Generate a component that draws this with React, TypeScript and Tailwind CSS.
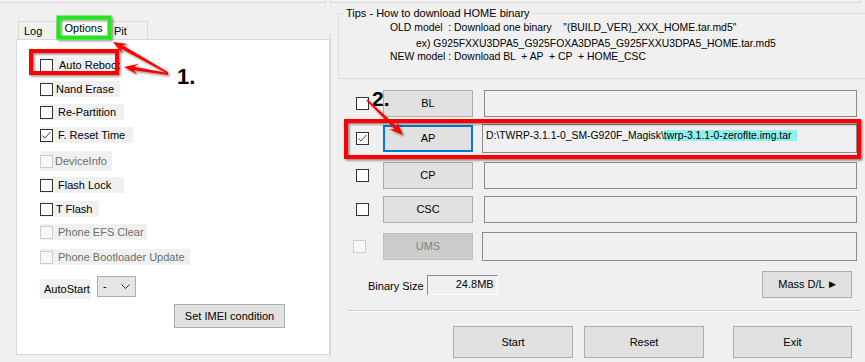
import type { ReactNode } from "react";

type Opt = {
  label: string;
  w: number;
  mt: number;
  gap: number;
  h?: number;
  checked?: boolean;
  disabled?: boolean;
};

const OPTIONS: Opt[] = [
  { label: "Auto Reboot", w: 78, mt: 17, gap: 6 },
  { label: "Nand Erase", w: 80, mt: 8, gap: 3 },
  { label: "Re-Partition", w: 84, mt: 7, gap: 5 },
  { label: "F. Reset Time", w: 93, mt: 7, gap: 5, checked: true },
  { label: "DeviceInfo", w: 72, mt: 8, gap: 2, h: 20, disabled: true },
  { label: "Flash Lock", w: 84, mt: 6, gap: 5 },
  { label: "T Flash", w: 59, mt: 8, gap: 3 },
  { label: "Phone EFS Clear", w: 107, mt: 7, gap: 5, disabled: true },
  { label: "Phone Bootloader Update", w: 150, mt: 9, gap: 5, disabled: true },
];

function Check({ checked = false, disabled = false }: { checked?: boolean; disabled?: boolean }) {
  return (
    <span
      className={`flex h-[13px] w-[13px] shrink-0 items-center justify-center border ${
        disabled ? "border-[#cccccc] bg-[#f7f7f7]" : "border-[#333333] bg-white"
      }`}
    >
      {checked && (
        <svg width="11" height="11" viewBox="0 0 11 11">
          <polyline points="1.5,5.5 4,8 9.5,2" fill="none" stroke="#444" strokeWidth="1" />
        </svg>
      )}
    </span>
  );
}

function Btn({
  children,
  className = "",
  focused = false,
  disabled = false,
}: {
  children: ReactNode;
  className?: string;
  focused?: boolean;
  disabled?: boolean;
}) {
  return (
    <div
      className={`flex shrink-0 items-center justify-center ${
        focused
          ? "border-2 border-[#0078d7] bg-[#e1e1e1]"
          : disabled
          ? "border border-[#bfbfbf] bg-[#cccccc] text-[#838383]"
          : "border border-[#adadad] bg-[#e1e1e1]"
      } ${className}`}
    >
      {children}
    </div>
  );
}

function FileRow({
  label,
  mt,
  checked,
  disabled,
  focused,
  value,
}: {
  label: string;
  mt: number;
  checked?: boolean;
  disabled?: boolean;
  focused?: boolean;
  value?: ReactNode;
}) {
  const tall = focused || disabled;
  return (
    <div className="flex items-center" style={{ marginTop: mt }}>
      <div className={disabled ? "ml-[22px]" : "ml-[25px]"}>
        <Check checked={checked} disabled={disabled} />
      </div>
      <Btn
        focused={focused}
        disabled={disabled}
        className={`h-[27px] w-[90px] ${disabled ? "ml-[17px]" : "ml-[14px]"}`}
      >
        {label}
      </Btn>
      <div
        className={`flex items-start border border-[#8a8a8a] bg-[#f0f0f0] ${
          tall ? "ml-[9px] h-[29px] w-[375px]" : "ml-[11px] h-[27px] w-[373px]"
        }`}
      >
        {value && (
          <div className="ml-[3px] mt-[4px] whitespace-pre text-[10.4px] leading-[13px]">{value}</div>
        )}
      </div>
    </div>
  );
}

function arrow(x1: number, y1: number, x2: number, y2: number) {
  const dx = x2 - x1;
  const dy = y2 - y1;
  const L = Math.hypot(dx, dy);
  const ux = dx / L;
  const uy = dy / L;
  const px = -uy;
  const py = ux;
  const head = 14;
  const hw = 5.5;
  const bx = x2 - ux * head;
  const by = y2 - uy * head;
  const nx = x2 - ux * (head - 4);
  const ny = y2 - uy * (head - 4);
  const t = 0.9;
  const s = 1.8;
  const pts = [
    [x1 + px * t, y1 + py * t],
    [nx + px * s, ny + py * s],
    [bx + px * hw, by + py * hw],
    [x2, y2],
    [bx - px * hw, by - py * hw],
    [nx - px * s, ny - py * s],
    [x1 - px * t, y1 - py * t],
  ];
  return pts.map((p) => `${p[0].toFixed(1)},${p[1].toFixed(1)}`).join(" ");
}

function Annotations() {
  return (
    <svg className="pointer-events-none absolute left-0 top-0 z-20" width="865" height="362">
      <defs>
        <filter id="sh" x="-20%" y="-20%" width="140%" height="140%">
          <feDropShadow dx="1.5" dy="1.5" stdDeviation="1.2" floodColor="#000" floodOpacity="0.45" />
        </filter>
      </defs>
      <g filter="url(#sh)">
        <rect x="58.5" y="17.5" width="51" height="20" fill="none" stroke="#1fe81f" strokeWidth="4" />
        <rect x="31" y="51" width="86" height="22" fill="none" stroke="#ff0000" strokeWidth="4" />
        <rect x="346" y="121" width="513" height="36" fill="none" stroke="#ff0000" strokeWidth="4" />
        <polygon points={arrow(168, 73, 113, 42)} fill="#ff0000" />
        <polygon points={arrow(168, 74, 124, 67)} fill="#ff0000" />
        <polygon points={arrow(367, 100, 403, 135)} fill="#ff0000" />
      </g>
    </svg>
  );
}

export default function App() {
  return (
    <div className="relative h-[362px] w-[865px] overflow-hidden bg-[#f0f0f0] font-['Liberation_Sans',Arial,sans-serif] text-[11px] text-black">
      {/* cut-off header boxes */}
      <div className="flex h-[3px]">
        <div className="w-[326px] border-b border-r border-[#d9d9d9]" />
        <div className="ml-[4px] w-[531px] border-b border-x border-[#d9d9d9]" />
      </div>

      <div className="flex">
        {/* left: tabs */}
        <div className="w-[330px] shrink-0 pl-[16px]">
          <div className="mt-[15px] flex h-[21px] items-end pl-[2px]">
            <div className="h-[18px] w-[39px] border border-b-0 border-[#d9d9d9] bg-[#f0f0f0] pl-[5px] pt-[3px] leading-[13px]">
              Log
            </div>
            <div className="relative z-10 -mb-px h-[22px] w-[53px] border border-b-0 border-[#d9d9d9] bg-white pt-[3px] text-center leading-[13px]">
              Options
            </div>
            <div className="h-[18px] w-[38px] border border-b-0 border-l-0 border-[#d9d9d9] bg-[#f0f0f0] pl-[4px] pt-[3px] leading-[13px]">
              Pit
            </div>
          </div>
          <div className="h-[316px] w-[314px] border border-[#d9d9d9] bg-white pl-[23px]">
            {OPTIONS.map((o) => (
              <div
                key={o.label}
                className="flex items-center bg-[#f0f0f0]"
                style={{ marginTop: o.mt, width: o.w, height: o.h ?? 16, gap: o.gap }}
              >
                <Check checked={o.checked} disabled={o.disabled} />
                <span className={`whitespace-nowrap leading-[13px] ${o.disabled ? "text-[#6d6d6d]" : ""}`}>
                  {o.label}
                </span>
              </div>
            ))}
            <div className="mt-[11px] flex items-start">
              <div className="mt-[3px] flex h-[20px] w-[51px] items-center bg-[#f0f0f0] pl-[4px]">AutoStart</div>
              <div className="ml-[6px] flex h-[21px] w-[39px] items-center justify-between border border-[#adadad] bg-[#e5e5e5] pl-[5px] pr-[5px]">
                <span>-</span>
                <svg width="9" height="6" viewBox="0 0 9 6">
                  <polyline points="0.5,0.5 4.5,4.5 8.5,0.5" fill="none" stroke="#333" strokeWidth="1" />
                </svg>
              </div>
            </div>
            <Btn className="ml-[134px] mt-[5px] h-[24px] w-[111px]">Set IMEI condition</Btn>
          </div>
        </div>

        {/* right: download area */}
        <div className="flex">
          <div className="mt-[31px] h-[324px] w-px bg-[#d9d9d9]" />
          <div className="w-[534px]">
            <div className="ml-[7px] mt-[10px] h-[66px] w-[540px] border border-[#dcdcdc]">
              <span className="-mt-[7px] ml-[5px] block w-fit bg-[#f0f0f0] px-[2px] leading-[13px]">
                Tips - How to download HOME binary
              </span>
              <div className="ml-[51px] mt-[1px] whitespace-pre text-[10.4px] leading-[13px]">
                {'OLD model  : Download one binary    "(BUILD_VER)_XXX_HOME.tar.md5"'}
              </div>
              <div className="ml-[77px] mt-[3px] whitespace-pre text-[10.4px] leading-[13px]">
                ex) G925FXXU3DPA5_G925FOXA3DPA5_G925FXXU3DPA5_HOME.tar.md5
              </div>
              <div className="ml-[51px] whitespace-pre text-[10.4px] leading-[13px]">
                NEW model : Download BL  + AP  + CP  + HOME_CSC
              </div>
            </div>

            <FileRow label="BL" mt={11} />
            <FileRow
              label="AP"
              mt={7}
              checked
              focused
              value={
                <>
                  D:\TWRP-3.1.1-0_SM-G920F_Magisk\
                  <span className="bg-[#8ff0ef] pr-[6px]">twrp-3.1.1-0-zeroflte.img.tar</span>
                </>
              }
            />
            <FileRow label="CP" mt={9} />
            <FileRow label="CSC" mt={7} />
            <FileRow label="UMS" mt={9} disabled />

            <div className="mt-[10px] flex items-center">
              <span className="ml-[37px] mt-[4px]">Binary Size</span>
              <div className="ml-[3px] flex h-[20px] w-[71px] items-center justify-end border-b border-l border-r border-t border-b-white border-l-[#8a8a8a] border-r-white border-t-[#8a8a8a] pr-[3px]">
                24.8MB
              </div>
              <Btn className="ml-auto mr-[13px] h-[27px] w-[90px] gap-[4px]">
                <span>Mass D/L</span>
                <span className="text-[9px]">▶</span>
              </Btn>
            </div>

            <div className="ml-[16px] mt-[12px] h-[2px] w-[514px] border-b border-t border-b-white border-t-[#cfcfcf]" />

            <div className="mt-[14px] flex">
              <Btn className="ml-[122px] h-[32px] w-[120px]">Start</Btn>
              <Btn className="ml-[11px] h-[32px] w-[120px]">Reset</Btn>
              <Btn className="ml-[29px] h-[32px] w-[119px]">Exit</Btn>
            </div>
          </div>
        </div>
      </div>

      <div className="absolute left-[177px] top-[65px] z-20 text-[22px] font-bold leading-[24px]">1.</div>
      <div className="absolute left-[372px] top-[87px] z-20 text-[21px] font-bold leading-[24px]">2.</div>
      <Annotations />
    </div>
  );
}
